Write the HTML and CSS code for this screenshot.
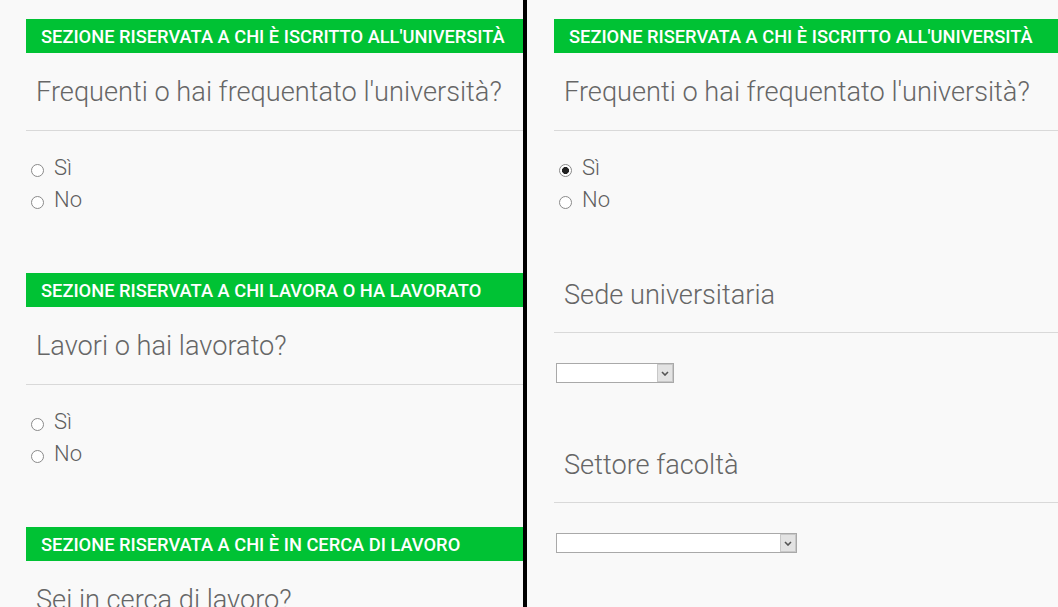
FILE: index.html
```html
<!DOCTYPE html>
<html lang="it">
<head>
<meta charset="utf-8">
<title>Sezioni</title>
<link rel="stylesheet" href="styles.css">
</head>
<body>
<div class="screen">
  <div class="panel panel-left">
    <section class="section">
      <div class="bar">SEZIONE RISERVATA A CHI È ISCRITTO ALL'UNIVERSITÀ</div>
      <h2 class="question">Frequenti o hai frequentato l'università?</h2>
      <div class="options">
        <label class="option"><input type="radio" name="uni-a" class="radio"><span>Sì</span></label>
        <label class="option"><input type="radio" name="uni-a" class="radio"><span>No</span></label>
      </div>
    </section>
    <section class="section">
      <div class="bar">SEZIONE RISERVATA A CHI LAVORA O HA LAVORATO</div>
      <h2 class="question">Lavori o hai lavorato?</h2>
      <div class="options">
        <label class="option"><input type="radio" name="lav-a" class="radio"><span>Sì</span></label>
        <label class="option"><input type="radio" name="lav-a" class="radio"><span>No</span></label>
      </div>
    </section>
    <section class="section">
      <div class="bar">SEZIONE RISERVATA A CHI È IN CERCA DI LAVORO</div>
      <h2 class="question">Sei in cerca di lavoro?</h2>
    </section>
  </div>
  <div class="divider"></div>
  <div class="panel panel-right">
    <section class="section">
      <div class="bar">SEZIONE RISERVATA A CHI È ISCRITTO ALL'UNIVERSITÀ</div>
      <h2 class="question">Frequenti o hai frequentato l'università?</h2>
      <div class="options">
        <label class="option"><input type="radio" name="uni-b" class="radio" checked><span>Sì</span></label>
        <label class="option"><input type="radio" name="uni-b" class="radio"><span>No</span></label>
      </div>
      <h2 class="question sub">Sede universitaria</h2>
      <div class="select select-short">
        <select aria-label="Sede universitaria"><option></option></select>
        <span class="arrow"><svg width="8" height="5" viewBox="0 0 8 5"><path d="M1 1 L4 4 L7 1" fill="none" stroke="#555" stroke-width="1.6"/></svg></span>
      </div>
      <h2 class="question sub sub2">Settore facoltà</h2>
      <div class="select select-long">
        <select aria-label="Settore facoltà"><option></option></select>
        <span class="arrow"><svg width="8" height="5" viewBox="0 0 8 5"><path d="M1 1 L4 4 L7 1" fill="none" stroke="#555" stroke-width="1.6"/></svg></span>
      </div>
    </section>
  </div>
</div>
</body>
</html>
```

FILE: styles.css
```css
* { box-sizing: border-box; }

html, body {
  margin: 0;
  padding: 0;
  background: #f9f9f9;
  overflow: hidden;
}

body {
  font-family: Roboto, "Liberation Sans", sans-serif;
  width: 1058px;
  height: 607px;
}

.screen {
  display: flex;
  height: 607px;
}

.panel {
  overflow: hidden;
  height: 607px;
}

.panel-left {
  width: 523px;
  padding-left: 26px;
}

.panel-right {
  flex: 1;
  padding-left: 27px;
}

.divider {
  width: 4px;
  background: #000;
  flex: none;
}

.section {
  padding-top: 19px;
  padding-bottom: 37px;
}

.bar {
  height: 34px;
  line-height: 35px;
  background: #00c234;
  color: #fff;
  font-weight: 500;
  font-size: 18.3px;
  padding-left: 15px;
  white-space: nowrap;
}

.question {
  margin: 0;
  padding: 24px 0 23px 10px;
  line-height: 30px;
  font-size: 27.2px;
  font-weight: 300;
  color: #666;
  border-bottom: 1px solid #d9d9d9;
  white-space: nowrap;
}

.options {
  margin-top: 22px;
  display: flex;
  flex-direction: column;
}

.option {
  display: flex;
  align-items: center;
  height: 32px;
  font-size: 22px;
  font-weight: 300;
  color: #5e5e5e;
}

.option span {
  margin-top: -3px;
}

.radio {
  appearance: none;
  -webkit-appearance: none;
  width: 13px;
  height: 13px;
  margin: 2px 10px 0 5px;
  border: 1px solid #8a8a8a;
  border-radius: 50%;
  background: #fff;
  flex: none;
}

.radio:checked {
  background: radial-gradient(circle, #222 0 3.2px, #fff 3.8px);
}

.question.sub {
  margin-top: 39px;
  padding-bottom: 22px;
}

.question.sub2 {
  margin-top: 43px;
}

.select {
  position: relative;
  margin: 30px 0 0 2px;
  height: 20px;
}

.select-short { width: 118px; }
.select-long { width: 241px; }

.select select {
  appearance: none;
  -webkit-appearance: none;
  display: block;
  width: 100%;
  height: 20px;
  margin: 0;
  border: 1px solid #a9a9a9;
  background: #fff;
  border-radius: 0;
}

.arrow {
  position: absolute;
  right: 1px;
  top: 1px;
  width: 16px;
  height: 18px;
  background: #e3e3e3;
  border: 1px solid #c8c8c8;
  display: flex;
  align-items: center;
  justify-content: center;
}
```
